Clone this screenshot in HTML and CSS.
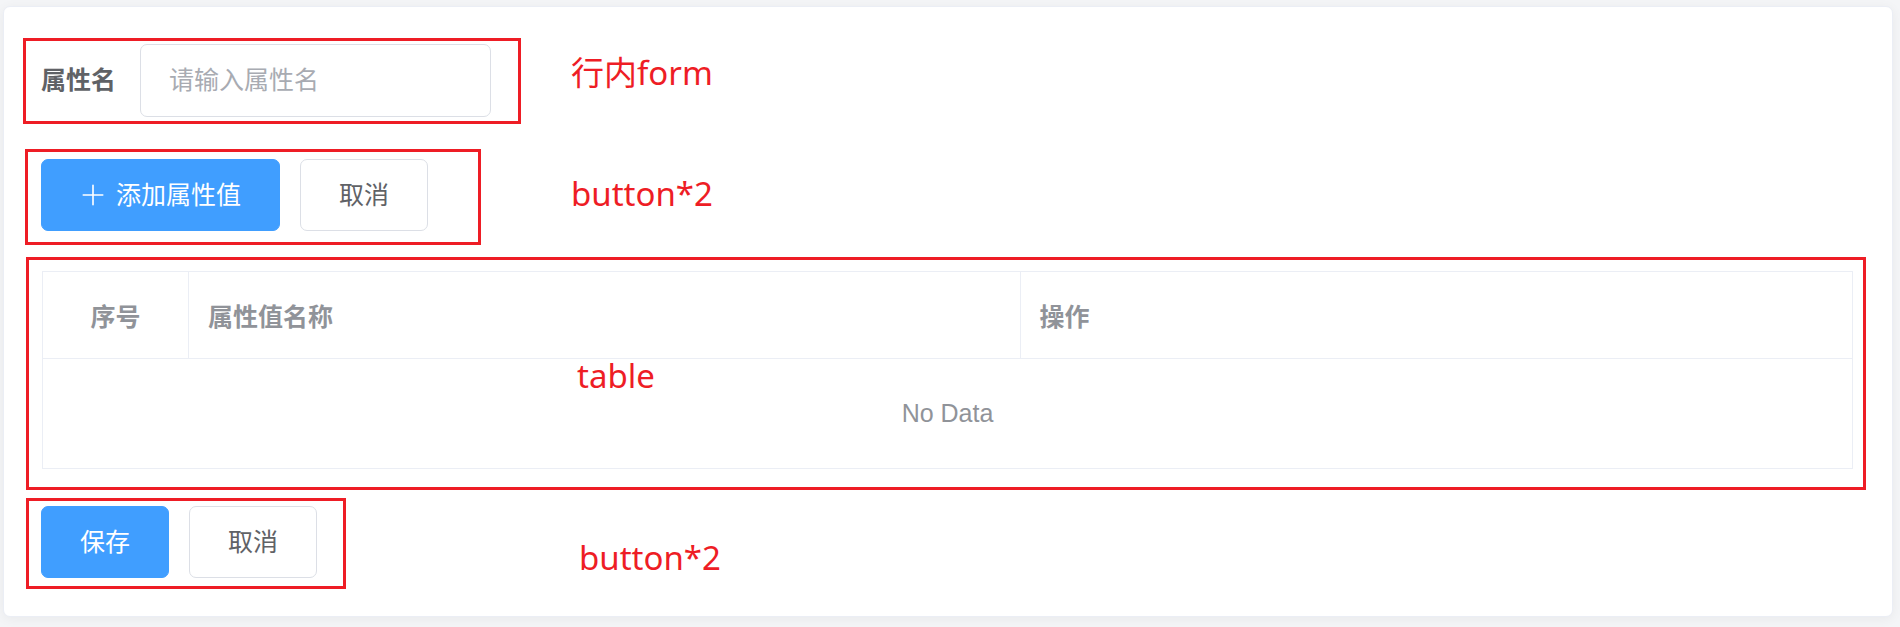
FILE: index.html
```html
<!DOCTYPE html>
<html lang="zh-CN">
<head>
<meta charset="utf-8">
<title>属性管理</title>
<link rel="stylesheet" href="styles.css">
</head>
<body>
<div class="page">
  <div class="card">
    <form class="attr-form">
      <label class="form-label" for="attrName">属性名</label>
      <input class="form-input" id="attrName" type="text" placeholder="请输入属性名">
    </form>

    <div class="btn-row">
      <button class="btn btn-primary" type="button">
        <svg class="btn-icon" viewBox="0 0 1024 1024" aria-hidden="true"><path fill="currentColor" d="M480 480V128a32 32 0 0 1 64 0v352h352a32 32 0 1 1 0 64H544v352a32 32 0 1 1-64 0V544H128a32 32 0 0 1 0-64z"/></svg>
        <span>添加属性值</span>
      </button>
      <button class="btn btn-default" type="button">取消</button>
    </div>

    <div class="table">
      <div class="table-head">
        <div class="th th-center">序号</div>
        <div class="th">属性值名称</div>
        <div class="th">操作</div>
      </div>
      <div class="table-empty">No Data</div>
    </div>

    <div class="btn-row footer-row">
      <button class="btn btn-primary" type="button">保存</button>
      <button class="btn btn-default" type="button">取消</button>
    </div>
  </div>

  <div class="annot-box box-form"></div>
  <div class="annot-box box-btns"></div>
  <div class="annot-box box-table"></div>
  <div class="annot-box box-footer"></div>

  <div class="annot-text text-form">行内form</div>
  <div class="annot-text text-btns">button*2</div>
  <div class="annot-text text-table">table</div>
  <div class="annot-text text-footer">button*2</div>
</div>
</body>
</html>
```

FILE: styles.css
```css
* {
  box-sizing: border-box;
}

html, body {
  margin: 0;
  padding: 0;
  background: #f4f5f7;
}

body {
  font-family: "Liberation Sans", "Noto Sans CJK SC", sans-serif;
  color: #606266;
}

.page {
  position: relative;
  width: 1900px;
  height: 627px;
  padding: 6px 7px 10px 3px;
  overflow: hidden;
}

.card {
  background: #ffffff;
  border: 1px solid #ebeef5;
  border-radius: 7px;
  box-shadow: 0 2px 12px rgba(0, 0, 0, 0.05);
  padding: 37px 39px 38px 37px;
  height: 611px;
}

/* form */
.attr-form {
  display: flex;
  align-items: center;
  height: 73px;
  margin: 0 0 42px 0;
}

.form-label {
  font-size: 25px;
  font-weight: 700;
  color: #606266;
  margin-right: 24px;
  line-height: 1;
}

.form-input {
  width: 351px;
  height: 73px;
  border: 1px solid #dcdfe6;
  border-radius: 7px;
  padding: 0 20px 0 28px;
  font-family: "Liberation Sans", "Noto Sans CJK SC", sans-serif;
  font-size: 25px;
  color: #606266;
  outline: none;
  background: #fff;
}

.form-input::placeholder {
  color: #a8abb2;
}

/* buttons */
.btn-row {
  display: flex;
  gap: 20px;
  height: 72px;
  margin-bottom: 40px;
}

.footer-row {
  margin-bottom: 0;
}

.btn {
  display: inline-flex;
  align-items: center;
  justify-content: center;
  height: 72px;
  padding: 0 38px;
  border-radius: 7px;
  font-family: "Liberation Sans", "Noto Sans CJK SC", sans-serif;
  font-size: 25px;
  line-height: 1;
  cursor: pointer;
}

.btn-primary {
  background: #409eff;
  border: 1px solid #409eff;
  color: #ffffff;
}

.btn-default {
  background: #ffffff;
  border: 1px solid #dcdfe6;
  color: #606266;
}

.btn-icon {
  width: 26px;
  height: 26px;
  margin-right: 10px;
  flex: none;
}

/* table */
.table {
  border: 1px solid #ebeef5;
  height: 198px;
  margin-bottom: 37px;
  margin-left: 1px;
  display: flex;
  flex-direction: column;
}

.table-head {
  display: grid;
  grid-template-columns: 146px 1fr 1fr;
  height: 87px;
  border-bottom: 1px solid #ebeef5;
}

.th {
  display: flex;
  align-items: center;
  padding: 0 19px;
  font-size: 25px;
  font-weight: 700;
  color: #909399;
  border-right: 1px solid #ebeef5;
}

.th:last-child {
  border-right: none;
}

.th-center {
  justify-content: center;
}

.table-empty {
  flex: 1;
  display: flex;
  align-items: center;
  justify-content: center;
  font-size: 25px;
  color: #909399;
}

/* annotations */
.annot-box {
  position: absolute;
  border: 3px solid #ee1d25;
}

.box-form {
  left: 23px;
  top: 38px;
  width: 498px;
  height: 86px;
}

.box-btns {
  left: 25px;
  top: 149px;
  width: 456px;
  height: 96px;
}

.box-table {
  left: 26px;
  top: 257px;
  width: 1840px;
  height: 233px;
}

.box-footer {
  left: 26px;
  top: 498px;
  width: 320px;
  height: 91px;
}

.annot-text {
  position: absolute;
  font-family: "Noto Sans", "Noto Sans CJK SC", sans-serif;
  font-size: 33px;
  line-height: 33px;
  color: #ee1d25;
  white-space: nowrap;
}

.text-form {
  left: 571px;
  top: 56px;
}

.text-btns {
  left: 571px;
  top: 177px;
}

.text-table {
  left: 577px;
  top: 359px;
}

.text-footer {
  left: 579px;
  top: 541px;
}
```
